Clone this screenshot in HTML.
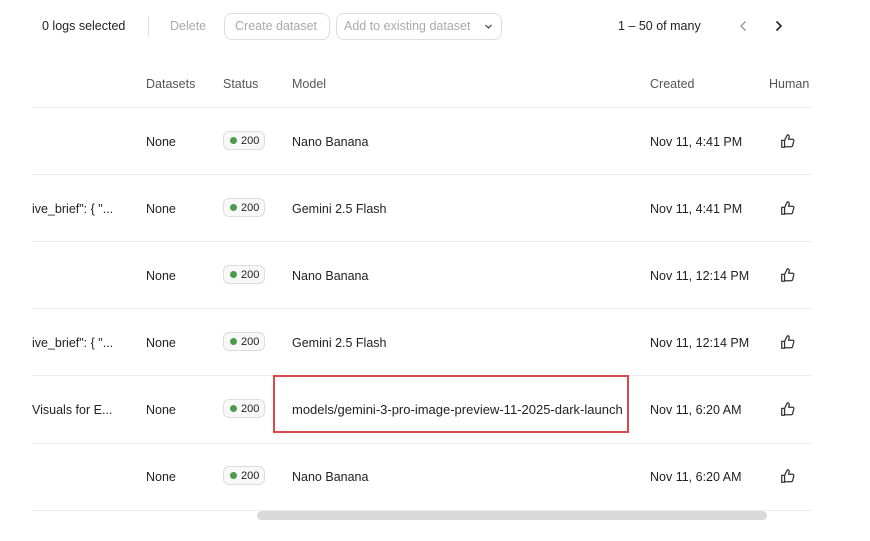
<!DOCTYPE html>
<html><head><style>
*{margin:0;padding:0;box-sizing:border-box}
body{width:870px;height:541px;background:#fff;font-family:"Liberation Sans",sans-serif;font-size:12.5px;color:#222;position:relative;overflow:hidden}
.a{position:absolute;white-space:nowrap}
.h{color:#555;font-size:12.5px}
.line{position:absolute;left:32px;width:780px;height:1px;background:#ececec}
.badge{position:absolute;left:223px;width:42px;height:19px;border:1px solid #ddd;border-radius:6px;background:#f8f8f8;font-size:11px;line-height:18px;padding-left:17px;color:#222}
.badge:before{content:"";position:absolute;left:6px;top:5px;width:7px;height:7px;border-radius:50%;background:#4d9a4d}
.btn{position:absolute;top:13px;height:27px;border:1px solid #ddd;border-radius:8px;color:#aaa;line-height:25px;font-size:12.5px;padding:0 10px}
</style></head><body>
<div class="a" style="left:42px;top:19px">0 logs selected</div>
<div class="a" style="left:148px;top:16px;width:1px;height:21px;background:#e0e0e0"></div>
<div class="a" style="left:170px;top:19px;color:#aaa">Delete</div>
<div class="btn" style="left:224px;width:106px">Create dataset</div>
<div class="btn" style="left:336px;width:166px;padding-left:7px">Add to existing dataset<svg style="position:absolute;right:8px;top:9px" width="9" height="7" viewBox="0 0 9 7"><path d="M1.5 2l3 3 3-3" stroke="#555" stroke-width="1.3" fill="none"/></svg></div>
<div class="a" style="left:618px;top:19px">1 – 50 of many</div>
<svg class="a" style="left:739px;top:20px" width="9" height="12" viewBox="0 0 9 12"><path d="M6.5 1.5L2 6l4.5 4.5" stroke="#999" stroke-width="1.4" fill="none"/></svg>
<svg class="a" style="left:774px;top:20px" width="9" height="12" viewBox="0 0 9 12"><path d="M2.5 1.5L7 6l-4.5 4.5" stroke="#222" stroke-width="1.6" fill="none"/></svg>
<div class="a h" style="left:146px;top:77px">Datasets</div>
<div class="a h" style="left:223px;top:77px">Status</div>
<div class="a h" style="left:292px;top:77px">Model</div>
<div class="a h" style="left:650px;top:77px">Created</div>
<div class="a h" style="left:769px;top:77px">Human</div>
<div class="line" style="top:107px"></div>
<div class="line" style="top:174px"></div>
<div class="line" style="top:241px"></div>
<div class="line" style="top:308px"></div>
<div class="line" style="top:375px"></div>
<div class="line" style="top:443px"></div>
<div class="line" style="top:510px"></div>

<div class="a" style="left:32px;top:202px">ive_brief": { "...</div>
<div class="a" style="left:32px;top:336px">ive_brief": { "...</div>
<div class="a" style="left:32px;top:403px">Visuals for E...</div>

<div class="a" style="left:146px;top:135px">None</div>
<div class="a" style="left:146px;top:202px">None</div>
<div class="a" style="left:146px;top:269px">None</div>
<div class="a" style="left:146px;top:336px">None</div>
<div class="a" style="left:146px;top:403px">None</div>
<div class="a" style="left:146px;top:470px">None</div>

<div class="badge" style="top:131px">200</div>
<div class="badge" style="top:198px">200</div>
<div class="badge" style="top:265px">200</div>
<div class="badge" style="top:332px">200</div>
<div class="badge" style="top:399px">200</div>
<div class="badge" style="top:466px">200</div>

<div class="a" style="left:292px;top:135px">Nano Banana</div>
<div class="a" style="left:292px;top:202px">Gemini 2.5 Flash</div>
<div class="a" style="left:292px;top:269px">Nano Banana</div>
<div class="a" style="left:292px;top:336px">Gemini 2.5 Flash</div>
<div class="a" style="left:292px;top:402px;font-size:13px">models/gemini-3-pro-image-preview-11-2025-dark-launch</div>
<div class="a" style="left:292px;top:470px">Nano Banana</div>
<div class="a" style="left:273px;top:375px;width:356px;height:58px;border:2px solid #d94a4a"></div>

<div class="a" style="left:650px;top:135px">Nov 11, 4:41 PM</div>
<div class="a" style="left:650px;top:202px">Nov 11, 4:41 PM</div>
<div class="a" style="left:650px;top:269px">Nov 11, 12:14 PM</div>
<div class="a" style="left:650px;top:336px">Nov 11, 12:14 PM</div>
<div class="a" style="left:650px;top:403px">Nov 11, 6:20 AM</div>
<div class="a" style="left:650px;top:470px">Nov 11, 6:20 AM</div>

<svg width="0" height="0" style="position:absolute"><defs><g id="t"><path d="M1.5 6.5h2.5v6h-2.5z M4 6.5l2.5-5c1.2 0 1.8.8 1.5 2l-.5 2h3.5c.8 0 1.3.7 1.1 1.4l-1.1 4.2c-.2.6-.7.9-1.3.9H4" stroke="#333" stroke-width="1.1" fill="none" stroke-linejoin="round"/></g></defs></svg>
<svg class="a" style="left:780px;top:133px" width="16" height="16" viewBox="0 0 14 14"><use href="#t"/></svg>
<svg class="a" style="left:780px;top:200px" width="16" height="16" viewBox="0 0 14 14"><use href="#t"/></svg>
<svg class="a" style="left:780px;top:267px" width="16" height="16" viewBox="0 0 14 14"><use href="#t"/></svg>
<svg class="a" style="left:780px;top:334px" width="16" height="16" viewBox="0 0 14 14"><use href="#t"/></svg>
<svg class="a" style="left:780px;top:401px" width="16" height="16" viewBox="0 0 14 14"><use href="#t"/></svg>
<svg class="a" style="left:780px;top:468px" width="16" height="16" viewBox="0 0 14 14"><use href="#t"/></svg>

<div class="a" style="left:257px;top:511px;width:510px;height:9px;border-radius:5px;background:#d9d9d9"></div>
</body></html>
